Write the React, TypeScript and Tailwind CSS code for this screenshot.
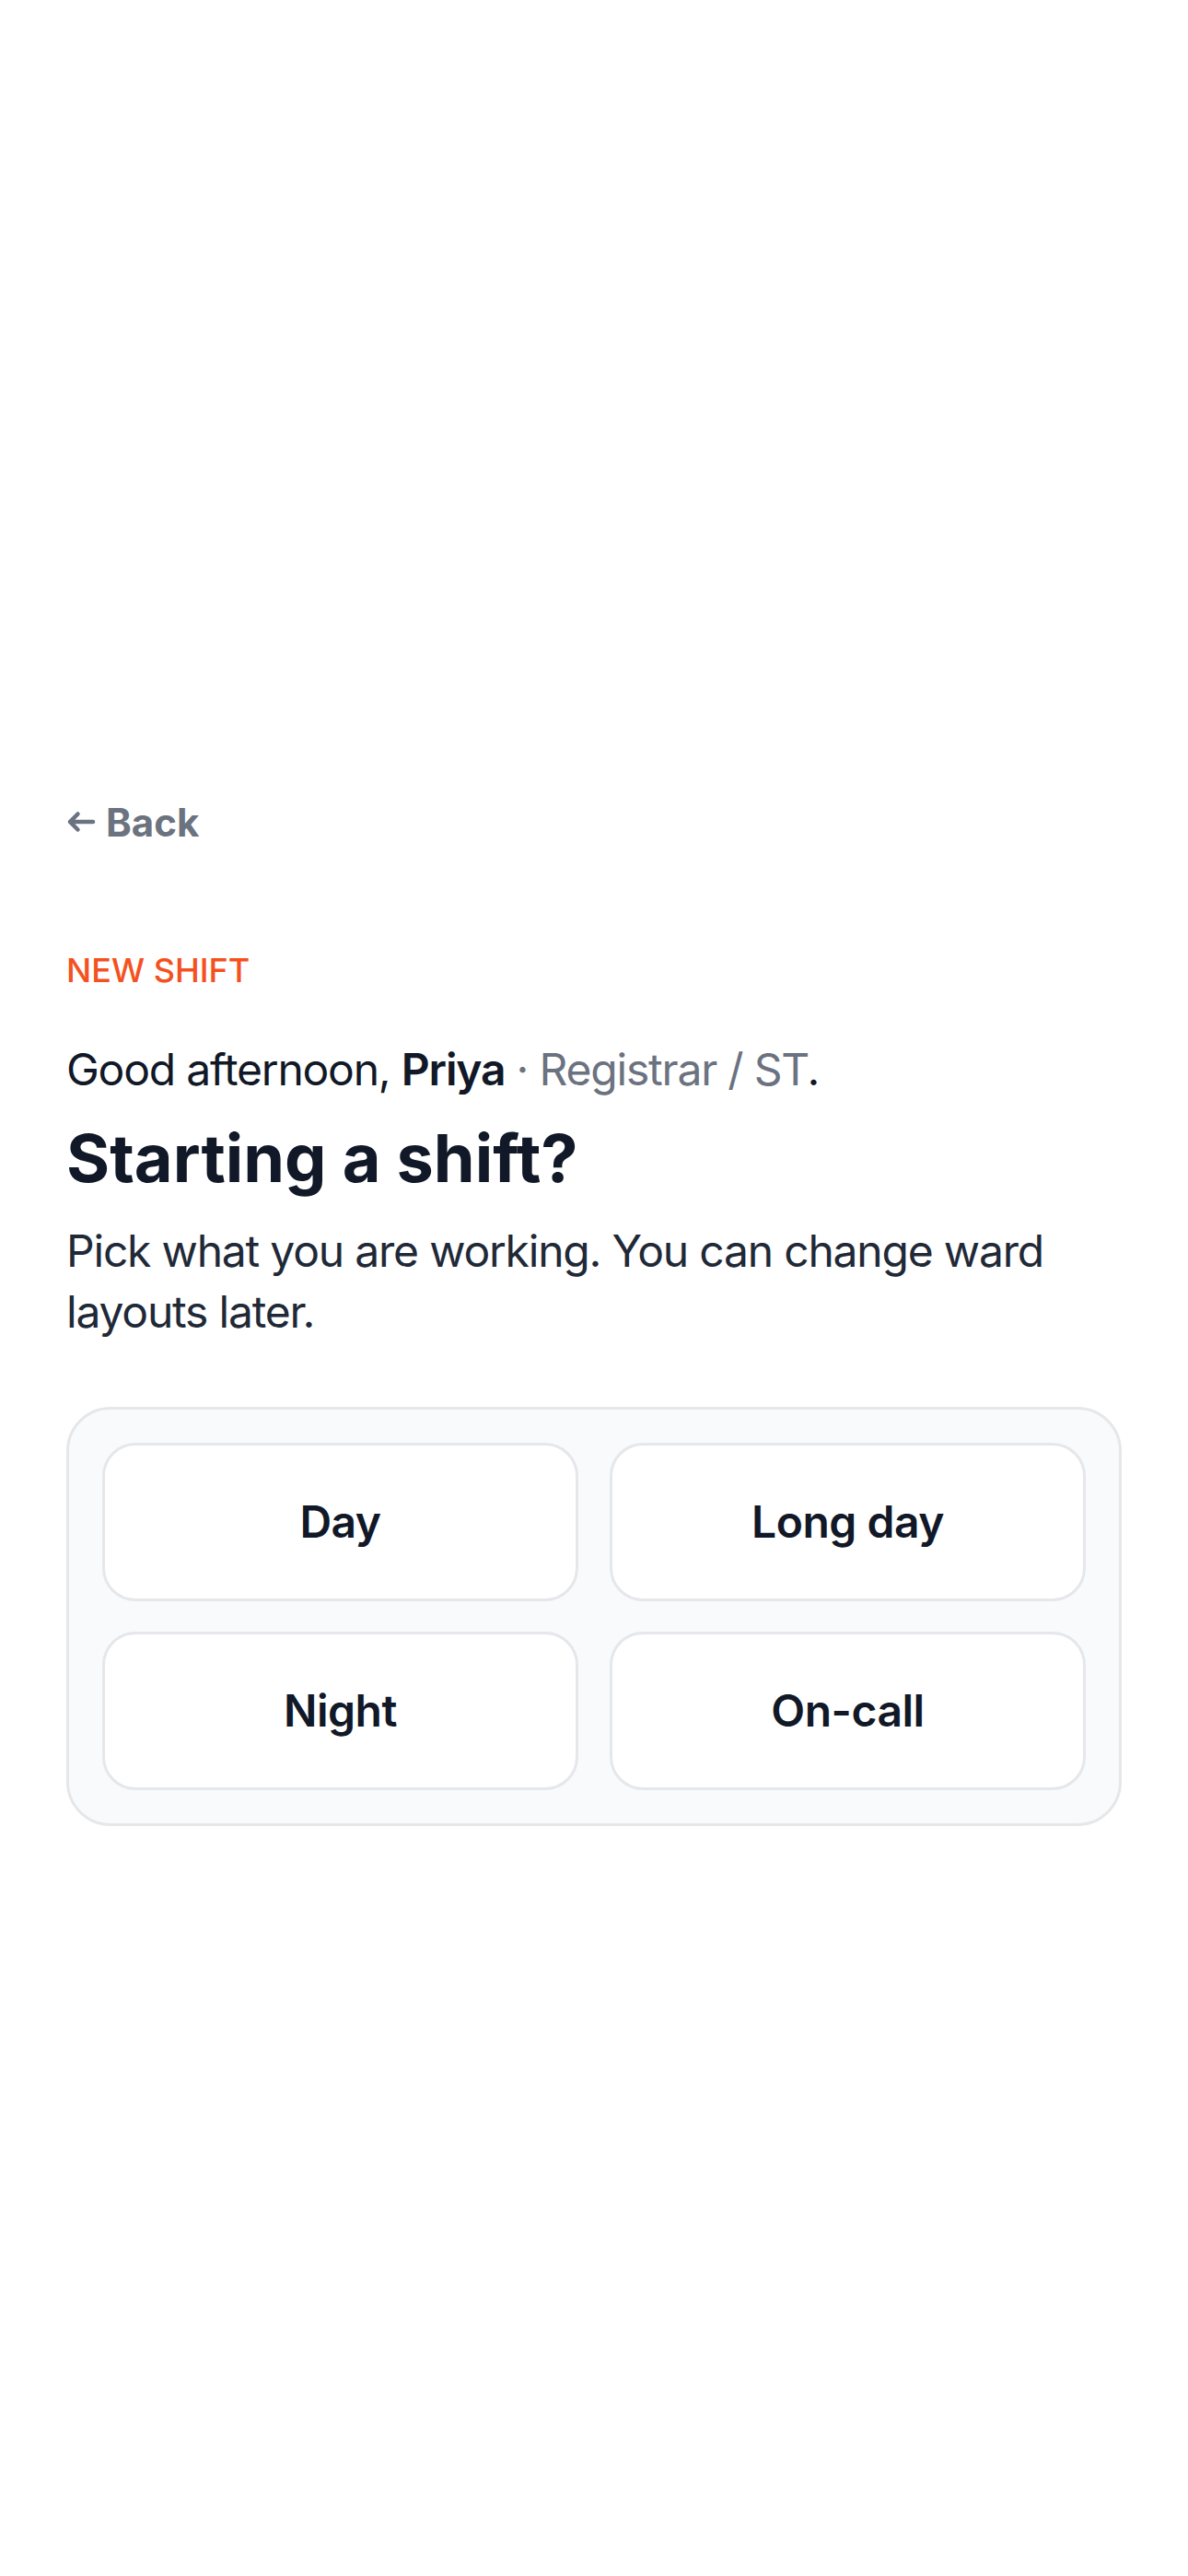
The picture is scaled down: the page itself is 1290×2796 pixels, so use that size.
const SHIFT_TYPES = ["Day", "Long day", "Night", "On-call"];

function BackArrow() {
  return (
    <svg width="32" height="24" viewBox="0 0 32 24" fill="none" aria-hidden="true">
      <path
        d="M29 12H4M12.5 3.5L4 12l8.5 8.5"
        stroke="currentColor"
        strokeWidth="4.5"
        strokeLinecap="round"
        strokeLinejoin="round"
      />
    </svg>
  );
}

function ShiftButton({ label }: { label: string }) {
  return (
    <button
      type="button"
      className="flex h-[172px] items-center justify-center rounded-[36px] border-[3px] border-[#e5e7eb] bg-white text-[48px] font-semibold tracking-[-0.01em] text-[#111827]"
    >
      {label}
    </button>
  );
}

export default function App() {
  return (
    <div
      className="min-h-[2796px] bg-white px-[72px] pt-[862px] text-[#111827]"
      style={{ fontFamily: "Inter, 'Noto Sans', sans-serif" }}
    >
      <button type="button" className="flex h-[60px] items-center gap-[11px] text-[42px] font-bold text-[#6b7280]">
        <BackArrow />
        <span>Back</span>
      </button>

      <p className="mt-[107px] text-[36px] leading-[48px] font-medium text-[#f4511e]">NEW SHIFT</p>

      <p className="mt-[48px] text-[48px] leading-[72px] tracking-tight">
        Good afternoon, <span className="font-semibold">Priya</span>
        <span className="text-[#6b7280]"> · Registrar / ST</span>.
      </p>

      <h1 className="mt-[12px] text-[72px] leading-[96px] font-bold">Starting a shift?</h1>

      <p className="mt-[20px] text-[48px] leading-[66px] tracking-tight text-[#1f2937]">
        Pick what you are working. You can change ward layouts later.
      </p>

      <div className="mt-[70px] rounded-[48px] border-[3px] border-[#e5e7eb] bg-[#f9fafb] p-[36px]">
        <div className="grid grid-cols-2 gap-x-[34px] gap-y-[33px]">
          {SHIFT_TYPES.map((s) => (
            <ShiftButton key={s} label={s} />
          ))}
        </div>
      </div>
    </div>
  );
}
